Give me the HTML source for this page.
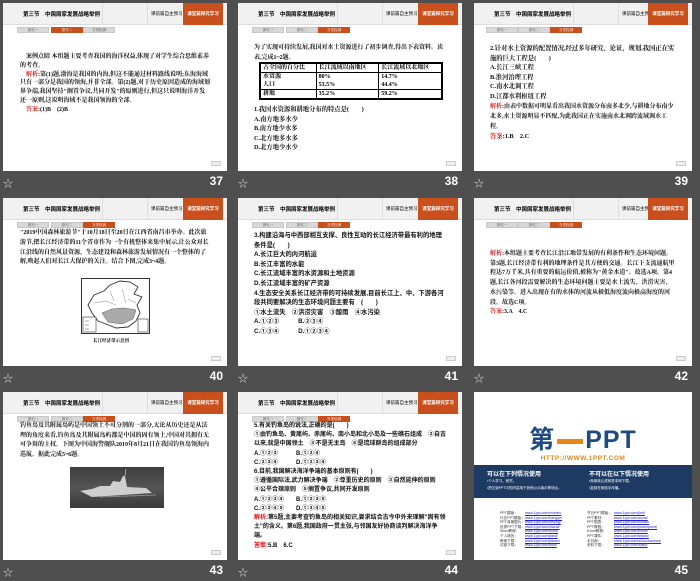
<!DOCTYPE html>
<html><head><meta charset="utf-8">
<style>
*{margin:0;padding:0;box-sizing:border-box}
body{width:700px;height:577px;background:#4f4f4f;position:relative;overflow:hidden;font-family:"Liberation Sans","Noto Sans CJK SC",sans-serif}
.s{position:absolute;background:#fff;width:224px;height:168px;overflow:hidden;font-family:"Liberation Serif","Noto Serif CJK SC",serif;color:#000}
.hd{position:absolute;left:0;top:0;width:100%;height:22px;background:#f1f1f1;border-bottom:1px solid #ddd}
.hd .t{position:absolute;left:20px;top:7px;font-size:5.5px;font-weight:bold;font-family:"Liberation Sans","Noto Sans CJK SC",sans-serif}
.hd .d1{position:absolute;left:99px;top:0;width:1px;height:22px;background:#ddd}
.hd .d2{position:absolute;left:144px;top:0;width:1px;height:22px;background:#ddd}
.hd .m{position:absolute;left:148px;top:8px;font-size:4.5px;font-family:"Liberation Sans","Noto Sans CJK SC",sans-serif}
.hd .o{position:absolute;right:4px;top:0;width:40px;height:22px;background:#c9501c;color:#fff;font-size:4.5px;text-align:center;line-height:22px;font-weight:bold;font-family:"Liberation Sans","Noto Sans CJK SC",sans-serif}
.tb{position:absolute;top:24px;height:6px;width:32px;background:#d8d8d8;border:1px solid #c8c8c8;font-size:3.5px;color:#444;text-align:center;line-height:4px}
.tb.a{background:#c9501c;border-color:#c9501c;color:#fff}
.c{position:absolute;left:17px;right:16px;font-size:6.3px;line-height:9.6px;font-weight:bold;color:#111}
.r{color:#e01010}
.pg{position:absolute;right:6px;bottom:5px;width:10px;height:5px;background:#eee;border:1px solid #ccc}
.f{position:absolute;height:20px;color:#fff;font-size:12px;font-weight:bold}
.f .st{position:absolute;left:0;top:3px;font-size:10px;font-weight:normal;color:#ddd}
.f .n{position:absolute;right:4px;top:2px;font-family:"Liberation Sans",sans-serif}
table{border-collapse:collapse;font-size:6px;font-weight:bold}
td{border:1px solid #000;padding:0 2px;height:9px;line-height:8px}
</style></head><body>

<!-- slide 37 -->
<div class="s" style="left:3px;top:3px">
<div class="hd"><span class="t">第三节　中国国家发展战略举例</span><i class="d1"></i><i class="d2"></i><span class="m">课前篇自主预习</span><span class="o">课堂篇探究学习</span></div>
<div class="tb" style="left:14px">探究一</div><div class="tb a" style="left:48px">探究二</div><div class="tb" style="left:80px">当堂检测</div>
<div class="c" style="top:50px;font-size:6px;line-height:8.8px">　案例点睛 本组题主要考查我国的海洋权益,体现了对学生综合思维素养的考查。<br>　<span class="r">解析</span>:第(1)题,渤海是我国的内海,但这不能通过材料路线说明;东海海域只有一部分是我国的领海,并非全部。第(2)题,对于历史原因造成的海域划界争端,我国坚持"搁置争议,共同开发"的原则进行,但这只说明海洋开发还一原则,这说明海域不是我国领海的全部。<br>　<span class="r">答案</span>:(1)B　(2)B</div>
<div class="pg"></div></div>
<div class="f" style="left:3px;top:172px;width:224px"><span class="st">☆</span><span class="n">37</span></div>

<!-- slide 38 -->
<div class="s" style="left:238px;top:3px">
<div class="hd"><span class="t">第三节　中国国家发展战略举例</span><i class="d1"></i><i class="d2"></i><span class="m">课前篇自主预习</span><span class="o">课堂篇探究学习</span></div>
<div class="tb" style="left:14px">探究一</div><div class="tb" style="left:48px">探究二</div><div class="tb a" style="left:80px">当堂检测</div>
<div class="c" style="top:41px;left:16px;font-size:6px">为了实现可持续发展,我国对水土资源进行了初步调查,得出下表资料。读表,完成1~2题。</div>
<table style="position:absolute;left:21px;top:59px;width:184px;border:2px solid #000"><tr><td>占全国的百分比</td><td>长江流域以南地区</td><td>长江流域以北地区</td></tr><tr><td>水资源<br>人口</td><td>80%<br>53.5%</td><td>14.7%<br>44.4%</td></tr><tr><td>耕地</td><td>35.2%</td><td>59.2%</td></tr></table>
<div class="c" style="top:102px;left:16px">1.我国水资源和耕地分布的特点是(　　)<br>A.南方地多水少<br>B.南方地少水多<br>C.北方地多水多<br>D.北方地少水少</div>
<div class="pg"></div></div>
<div class="f" style="left:238px;top:172px;width:224px"><span class="st">☆</span><span class="n">38</span></div>

<!-- slide 39 -->
<div class="s" style="left:474px;top:3px;width:218px">
<div class="hd"><span class="t">第三节　中国国家发展战略举例</span><i class="d1"></i><i class="d2"></i><span class="m">课前篇自主预习</span><span class="o">课堂篇探究学习</span></div>
<div class="tb" style="left:12px">探究一</div><div class="tb" style="left:44px">探究二</div><div class="tb a" style="left:76px">当堂检测</div>
<div class="c" style="top:41px;left:16px">2.针对水土资源的配置情况,经过多年研究、论证、规划,我国正在实施的巨大工程是(　　)<br>A.长江三峡工程<br>B.淮河治理工程<br>C.南水北调工程<br>D.江都水利枢纽工程<br><span style="font-size:6px;line-height:9px"><span class="r">解析</span>:由表中数据可明显看出我国水资源分布南多北少,与耕地分布南少北多,水土资源明显不匹配,为此我国正在实施南水北调跨流域调水工程。</span><br><span class="r">答案</span>:1.B　2.C</div>
<div class="pg"></div></div>
<div class="f" style="left:474px;top:172px;width:218px"><span class="st">☆</span><span class="n">39</span></div>

<!-- slide 40 -->
<div class="s" style="left:3px;top:198px">
<div class="hd"><span class="t">第三节　中国国家发展战略举例</span><i class="d1"></i><i class="d2"></i><span class="m">课前篇自主预习</span><span class="o">课堂篇探究学习</span></div>
<div class="tb" style="left:14px">探究一</div><div class="tb" style="left:48px">探究二</div><div class="tb a" style="left:80px">当堂检测</div>
<div class="c" style="top:31px;font-size:6px;line-height:9.8px">"2019中国森林旅游节"于10月18日至20日在江西省南昌市举办。此次旅游节,把长江经济带的11个省市作为一个有机整体来集中展示,让公众对长江沿线的自然风景资源、生态建设和森林旅游发展情况有一个整体的了解,唤起人们对长江大保护的关注。结合下图,完成3~4题。</div>
<div style="position:absolute;left:78px;top:80px;width:69px;height:56px;border:1px solid #333;background:#fff">
<svg width="67" height="54" viewBox="0 0 67 54"><path d="M6 26 L12 16 L22 12 L28 6 L38 2 L48 3 L56 8 L52 15 L60 18 L55 26 L58 34 L54 42 L46 48 L34 49 L24 45 L16 42 L10 34 Z" fill="#fff" stroke="#333" stroke-width="0.9"/><path d="M20 34 L30 30 L42 29 L54 31 L51 40 L40 45 L26 43 Z" fill="#aaa" stroke="#555" stroke-width="0.5"/><path d="M12 24 L24 22 L34 26 M28 12 L32 22 M40 10 L44 24 M46 20 L54 24" stroke="#888" stroke-width="0.5" fill="none"/><rect x="1" y="38" width="13" height="15" fill="#fff" stroke="#333" stroke-width="0.6"/><path d="M3 42h4M3 46h4M3 50h4" stroke="#555" stroke-width="0.6"/><rect x="56" y="40" width="10" height="13" fill="#fff" stroke="#333" stroke-width="0.6"/></svg></div>
<div style="position:absolute;left:90px;top:140px;font-size:4.5px;font-weight:bold">长江经济带示意图</div>
<div class="pg"></div></div>
<div class="f" style="left:3px;top:367px;width:224px"><span class="st">☆</span><span class="n">40</span></div>

<!-- slide 41 -->
<div class="s" style="left:238px;top:198px">
<div class="hd"><span class="t">第三节　中国国家发展战略举例</span><i class="d1"></i><i class="d2"></i><span class="m">课前篇自主预习</span><span class="o">课堂篇探究学习</span></div>
<div class="tb" style="left:14px">探究一</div><div class="tb" style="left:48px">探究二</div><div class="tb a" style="left:80px">当堂检测</div>
<div class="c" style="top:33px;left:16px;font-family:'Liberation Sans','Noto Sans CJK SC',sans-serif">3.构建沿海与中西部相互支撑、良性互动的长江经济带最有利的地理条件是(　　)<br>A.长江巨大的内河航运<br>B.长江丰富的水能<br>C.长江流域丰富的水资源和土地资源<br>D.长江流域丰富的矿产资源<br>4.生态安全关系长江经济带的可持续发展,目前长江上、中、下游各河段共同要解决的生态环境问题主要有　(　　)<br>①水土流失　②洪涝灾害　③酸雨　④水污染<br>A.①②③　　　B.②③④<br>C.①③④　　　D.①②③④</div>
<div class="pg"></div></div>
<div class="f" style="left:238px;top:367px;width:224px"><span class="st">☆</span><span class="n">41</span></div>

<!-- slide 42 -->
<div class="s" style="left:474px;top:198px;width:218px">
<div class="hd"><span class="t">第三节　中国国家发展战略举例</span><i class="d1"></i><i class="d2"></i><span class="m">课前篇自主预习</span><span class="o">课堂篇探究学习</span></div>
<div class="tb" style="left:12px">探究一</div><div class="tb" style="left:44px">探究二</div><div class="tb a" style="left:76px">当堂检测</div>
<div class="c" style="top:52px;left:16px;font-size:6px;line-height:9.7px"><span class="r">解析</span>:本组题主要考查长江沿江地带发展的有利条件和生态环境问题。第3题,长江经济带有利的地理条件是其方便的交通。长江干支流通航里程达7万千米,具有重要的航运价值,被称为"黄金水道"。故选A项。第4题,长江各河段需要解决的生态环境问题主要是水土流失、洪涝灾害、水污染等。进入出现在有的水体的河流从极低海度流向极高海度的河段。故选C项。<br><span class="r">答案</span>:3.A　4.C</div>
<div class="pg"></div></div>
<div class="f" style="left:474px;top:367px;width:218px"><span class="st">☆</span><span class="n">42</span></div>

<!-- slide 43 -->
<div class="s" style="left:3px;top:392px">
<div class="hd"><span class="t">第三节　中国国家发展战略举例</span><i class="d1"></i><i class="d2"></i><span class="m">课前篇自主预习</span><span class="o">课堂篇探究学习</span></div>
<div class="tb" style="left:14px">探究一</div><div class="tb" style="left:48px">探究二</div><div class="tb a" style="left:80px">当堂检测</div>
<div class="c" style="top:30px;font-size:6px;line-height:9.7px">钓鱼岛及其附属岛屿是中国领土不可分割的一部分,无论从历史还是从法理的角度来看,钓鱼岛及其附属岛屿都是中国的固有领土,中国对其拥有无可争辩的主权。下图为中国海警舰队2019年8月21日在我国钓鱼岛领海内巡航。据此完成5~6题。</div>
<div style="position:absolute;left:67px;top:75px;width:94px;height:41px;background:linear-gradient(#3c3c3c,#555 50%,#3a3a3a)">
<svg width="94" height="41"><path d="M10 24 L22 22 L30 19 L40 19 L43 14 L50 15 L53 9 L55 9 L57 20 L76 21 L82 26 L22 30 Z" fill="#cfcfcf"/><path d="M55 9 L56 2" stroke="#ccc" stroke-width="0.7"/><path d="M30 30 L86 28" stroke="#888" stroke-width="1"/></svg></div>
<div class="pg"></div></div>
<div class="f" style="left:3px;top:561px;width:224px"><span class="st">☆</span><span class="n">43</span></div>

<!-- slide 44 -->
<div class="s" style="left:238px;top:392px">
<div class="hd"><span class="t">第三节　中国国家发展战略举例</span><i class="d1"></i><i class="d2"></i><span class="m">课前篇自主预习</span><span class="o">课堂篇探究学习</span></div>
<div class="tb" style="left:14px">探究一</div><div class="tb" style="left:48px">探究二</div><div class="tb a" style="left:80px">当堂检测</div>
<div class="c" style="top:30px;left:16px;font-size:6px;line-height:9.2px;font-family:'Liberation Sans','Noto Sans CJK SC',sans-serif">5.有关钓鱼岛的说法,正确的是(　　)<br>①由钓鱼岛、黄尾屿、赤尾屿、南小岛和北小岛及一些礁石组成　②自古以来,就是中国领土　③不是无主岛　④是琉球群岛的组成部分<br>A.①②③　　　B.①②④<br>C.②③④　　　D.①②③④<br>6.目前,我国解决海洋争端的基本原则有(　　)<br>①遵循国际法,武力解决争端　②尊重历史的原则　③自然延伸的原则　④公平合理原则　⑤搁置争议,共同开发原则<br>A.①②③④　　B.①②③⑤<br>C.②③④⑤　　D.①③④⑤<br><span class="r">解析</span>:第5题,主要考查钓鱼岛的相关知识,要求结合古今中外来理解"固有领土"的含义。第6题,我国政府一贯主张,与邻国友好协商谈判解决海洋争端。<br><span class="r">答案</span>:5.B　6.C</div>
<div class="pg"></div></div>
<div class="f" style="left:238px;top:561px;width:224px"><span class="st">☆</span><span class="n">44</span></div>

<!-- slide 45 -->
<div class="s" style="left:474px;top:392px;width:218px;font-family:'Liberation Sans','Noto Sans CJK SC',sans-serif">
<div style="position:absolute;left:0;width:100%;top:34px;text-align:center;white-space:nowrap;font-size:25px;line-height:28px;font-weight:bold;color:#1f4b82;letter-spacing:1px">第<span style="display:inline-block;width:26px;height:5px;background:#e8861a;vertical-align:middle;margin:0 2px"></span>PPT</div>
<div style="position:absolute;left:0;width:100%;top:63px;text-align:center;font-size:6.5px;color:#e8861a;font-weight:bold;letter-spacing:0.5px">HTTP://WWW.1PPT.COM</div>
<div style="position:absolute;left:0;top:73px;width:100%;height:33px;background:#1d3a62;color:#fff">
<div style="position:absolute;left:13px;top:4px;font-size:6px;font-weight:bold">可以在下列情况使用</div>
<div style="position:absolute;left:13px;top:13px;font-size:3.5px;line-height:7px">•个人学习、研究。<br>•把正版PPT中的内容用于其他公众演示等场合。</div>
<div style="position:absolute;left:115px;top:4px;font-size:6px;font-weight:bold">不可以在以下情况使用</div>
<div style="position:absolute;left:115px;top:13px;font-size:3.5px;line-height:7px">•商用转让或转售本网下载。<br>•复制在网络中传播。</div></div>
<div style="position:absolute;left:26px;top:119px;font-size:3.6px;line-height:4.6px;color:#333">PPT模板：<br>行业PPT模板：<br>PPT背景图片：<br>优秀PPT下载：<br>Word教程：<br>个人简历：<br>教案下载：<br>试卷下载：</div>
<div style="position:absolute;left:51px;top:119px;font-size:3.6px;line-height:4.6px;color:#22c;text-decoration:underline">www.1ppt.com/moban/<br>www.1ppt.com/hangye/<br>www.1ppt.com/beijing/<br>www.1ppt.com/xiazai/<br>www.1ppt.com/word/<br>www.1ppt.com/jianli/<br>www.1ppt.com/jiaoan/<br>www.1ppt.com/shiti/</div>
<div style="position:absolute;left:113px;top:119px;font-size:3.6px;line-height:4.6px;color:#333">节日PPT模板：<br>PPT素材：<br>PPT图表：<br>PPT教程：<br>Excel教程：<br>PPT课件：<br>手抄报：<br>资料下载：</div>
<div style="position:absolute;left:140px;top:119px;font-size:3.6px;line-height:4.6px;color:#22c;text-decoration:underline">www.1ppt.com/jieri/<br>www.1ppt.com/sucai/<br>www.1ppt.com/tubiao/<br>www.1ppt.com/powerpoint/<br>www.1ppt.com/excel/<br>www.1ppt.com/kejian/<br>www.1ppt.com/shouchaobao/<br>www.1ppt.com/ziliao/</div>
</div>
<div class="f" style="left:474px;top:561px;width:218px"><span class="n">45</span></div>

</body></html>
